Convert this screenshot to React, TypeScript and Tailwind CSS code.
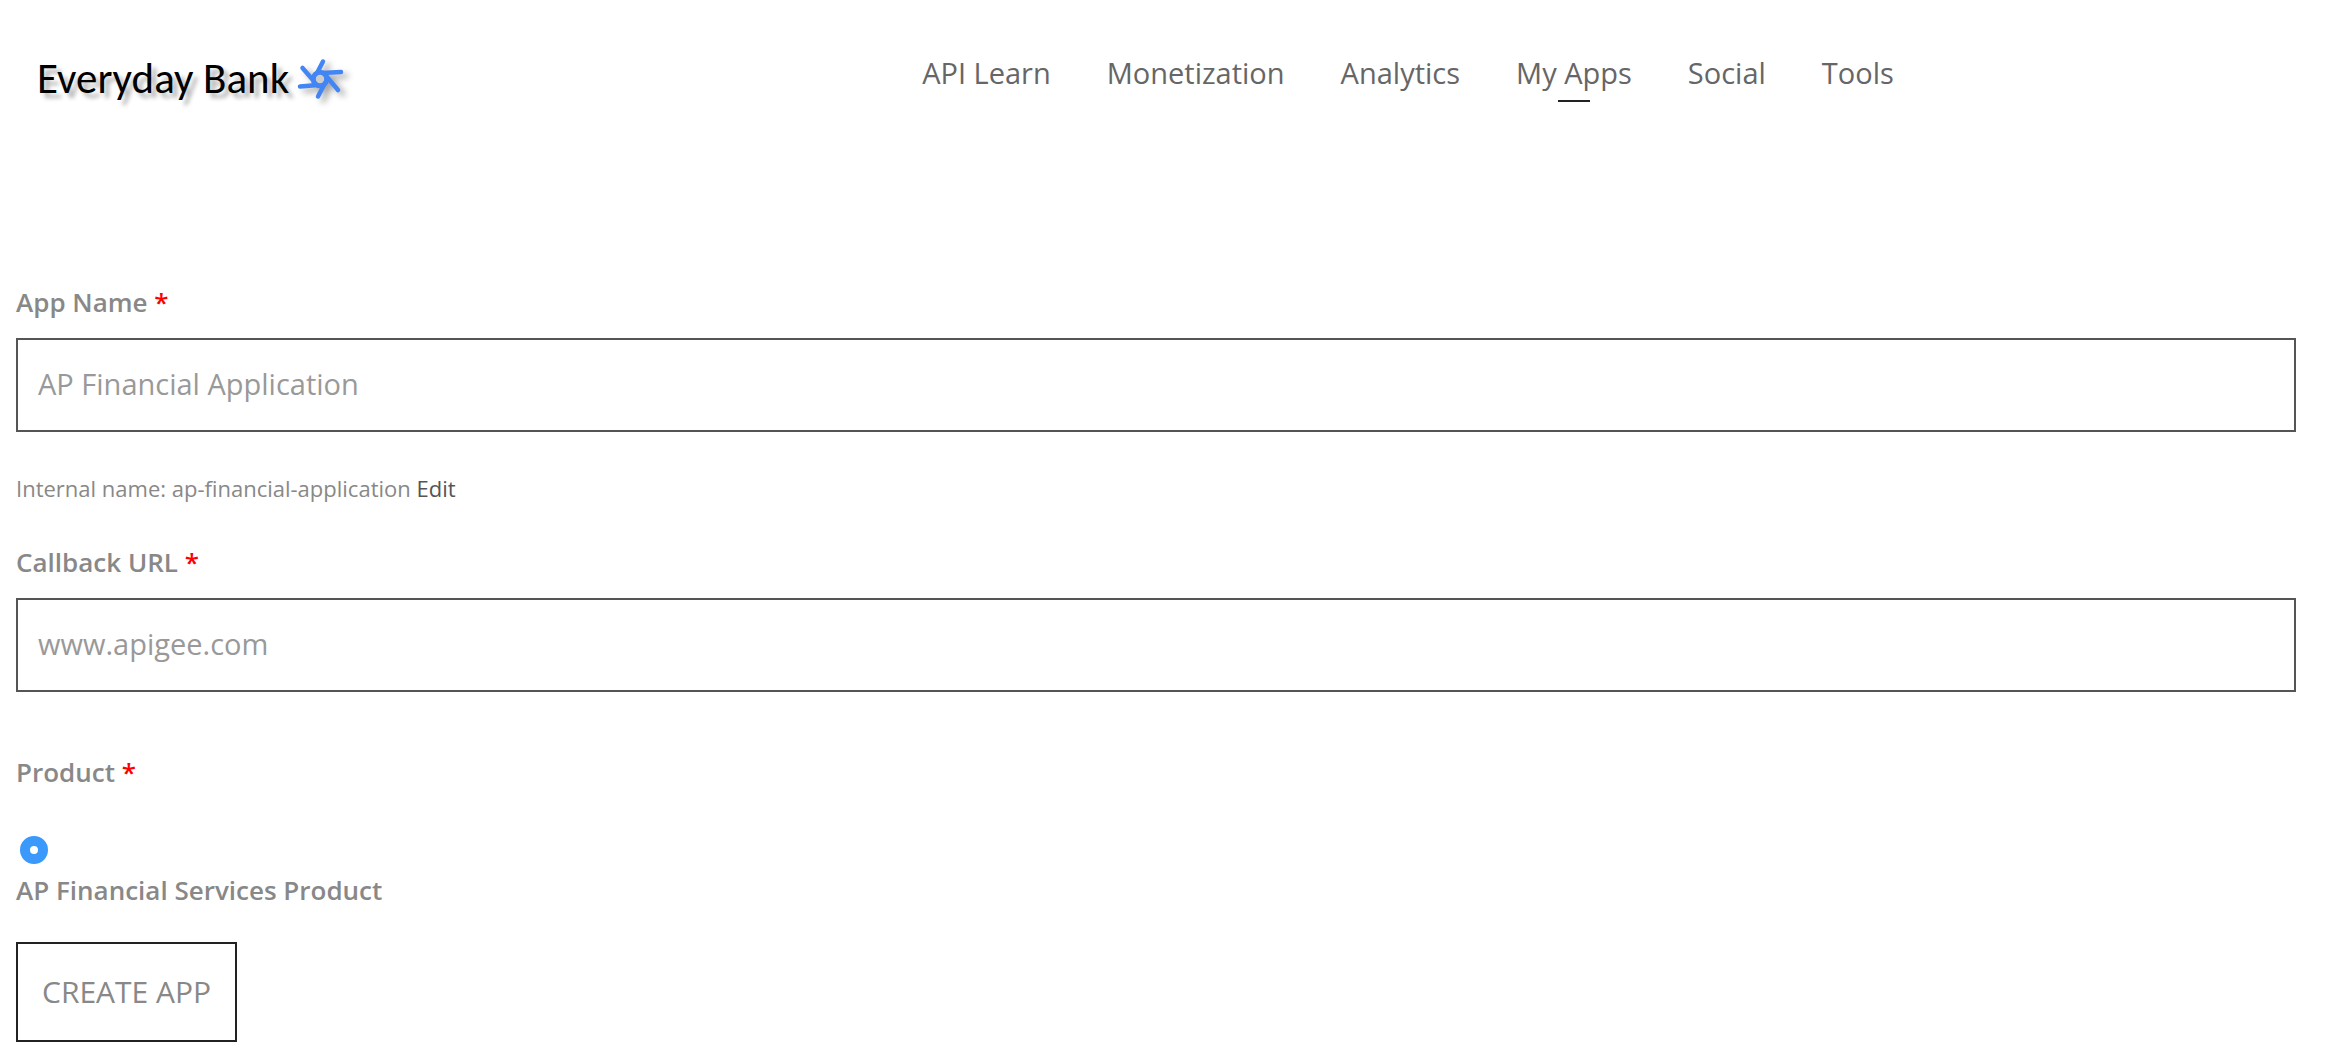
import type { ReactNode } from 'react';

const links = ['API Learn', 'Monetization', 'Analytics', 'My Apps', 'Social', 'Tools'];

function Required() {
  return <span className="text-[#ff0000]">*</span>;
}

function Field({ id, label, value, children }: { id: string; label: string; value: string; children?: ReactNode }) {
  return (
    <div className="flex flex-col">
      <label htmlFor={id} className="mb-4 text-[26px] leading-10 font-semibold text-[#888]">
        {label} <Required />
      </label>
      <input
        id={id}
        type="text"
        defaultValue={value}
        className="h-[94px] w-full border-2 border-[#555] bg-white px-5 pb-1 text-[29px] text-[#999] outline-none"
      />
      {children}
    </div>
  );
}

function Star() {
  return (
    <svg viewBox="0 0 46 40" className="h-10 w-[46px] overflow-visible drop-shadow-[5px_4px_3px_rgba(0,0,0,0.35)]" aria-hidden="true">
      <g stroke="#4285f4" strokeWidth="4.500" strokeLinecap="round" fill="none">
        <path d="M26 2.500 L19 16 M44 13 L25 14 M41 31 L30 18 M21 37.500 L28 24 M3 27.500 L21 26 M5.500 9 L16 21" />
        <circle cx="23" cy="20" r="6.500" strokeWidth="5.500" />
      </g>
      <circle cx="23" cy="20" r="4.200" fill="#ccc" />
    </svg>
  );
}

export default function App() {
  return (
    <div className="bg-white font-['Open_Sans',sans-serif] font-normal">
      <header className="flex items-start pt-[52px]">
        <a href="#" className="flex w-[490px] shrink-0 items-center pl-[37px]">
          <span className="font-['Carlito','Open_Sans',sans-serif] text-[43px] leading-[54px] whitespace-nowrap text-black [text-shadow:5px_5px_4px_rgba(0,0,0,0.3)]">
            Everyday Bank
          </span>
          <span className="ml-2">
            <Star />
          </span>
        </a>
        <nav className="flex flex-1 justify-center gap-14 pt-px text-[29px] leading-10 text-[#666]">
          {links.map((l) => (
            <a key={l} href="#" className="flex flex-col items-center whitespace-nowrap">
              {l}
              {l === 'My Apps' && <span className="mt-[7px] h-0.5 w-8 bg-[#222]" />}
            </a>
          ))}
        </nav>
      </header>
      <form className="flex flex-col pt-[176px] pr-[30px] pb-5 pl-4" onSubmit={(e) => e.preventDefault()}>
        <Field id="app-name" label="App Name" value="AP Financial Application">
          <p className="mt-9 mb-[34px] text-[22px] leading-10 text-[#888]">
            Internal name: ap-financial-application{' '}
            <a href="#" className="text-[#555]">
              Edit
            </a>
          </p>
        </Field>
        <Field id="callback" label="Callback URL" value="www.apigee.com" />
        <fieldset className="mt-[60px] flex flex-col items-start">
          <legend className="text-[26px] leading-10 font-semibold text-[#888]">
            Product <Required />
          </legend>
          <input
            id="product"
            type="radio"
            name="product"
            defaultChecked
            className="mt-11 ml-1 h-7 w-7 appearance-none rounded-full border-[10px] border-[#3b99fc] bg-white"
          />
          <label htmlFor="product" className="mt-1.5 text-[26px] leading-10 font-semibold text-[#888]">
            AP Financial Services Product
          </label>
        </fieldset>
        <button type="submit" className="mt-8 h-[100px] self-start border-2 border-[#222] px-6 pb-0.5 text-[30px] text-[#888]">
          CREATE APP
        </button>
      </form>
    </div>
  );
}
